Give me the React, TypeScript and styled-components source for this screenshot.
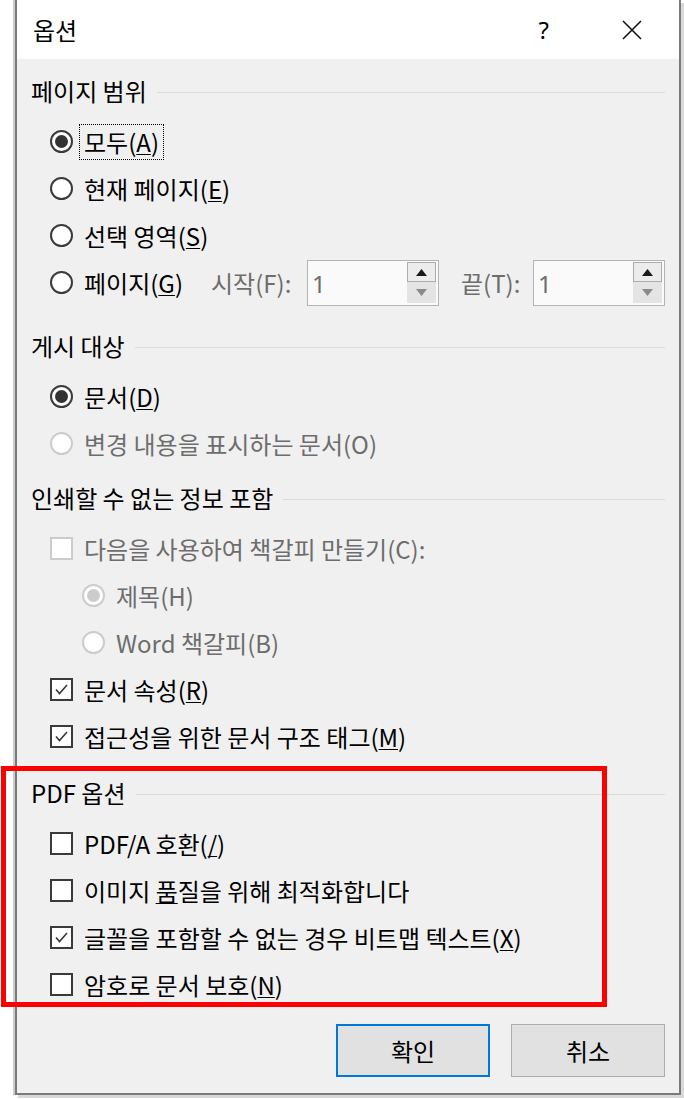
import React from 'react';
import styled, { createGlobalStyle } from 'styled-components';

const Global = createGlobalStyle`
  html, body { margin: 0; padding: 0; background: #fff; }
  body { font-family: "Noto Sans CJK KR", "Noto Sans", sans-serif; }
  * { box-sizing: border-box; }
`;

const Page = styled.div`
  position: relative;
  width: 684px;
  height: 1099px;
  overflow: hidden;
  background: #fff;
  display: flex;
  align-items: flex-start;
  padding-left: 15px;
`;

const Dialog = styled.div`
  width: 666px;
  height: 1095px;
  border: 2px solid #7a7a7a;
  border-top: none;
  background: #f0f0f0;
  display: flex;
  flex-direction: column;
  box-shadow: -2px 0 0 #cccccc, 3px 3px 0 #d9d9d9;
  color: #000;
  font-size: 24px;
`;

const TitleBar = styled.div`
  height: 59px;
  flex: none;
  background: #fff;
  display: flex;
  align-items: center;
  padding: 0 37px 0 16px;
`;

const TitleText = styled.div`
  flex: 1;
  line-height: 30px;
`;

const HelpMark = styled.span`
  font-family: "Noto Sans", sans-serif;
  font-size: 24px;
  line-height: 30px;
  margin-right: 73px;
`;

const CloseIcon = styled.svg`
  width: 20px;
  height: 20px;
  display: block;
`;

const Body = styled.div`
  flex: 1;
  display: flex;
  flex-direction: column;
  padding: 17px 14px 16px 14px;
`;

const Section = styled.section<{ $mt?: number }>`
  margin-top: ${(p) => p.$mt ?? 0}px;
  display: flex;
  flex-direction: column;
`;

const Header = styled.div`
  height: 30px;
  line-height: 30px;
  display: flex;
  align-items: center;
  white-space: nowrap;
`;

const HeaderLine = styled.div`
  flex: 1;
  height: 1px;
  background: #dcdcdc;
  margin-left: 10px;
  margin-top: 3px;
`;

const Rows = styled.div`
  margin-top: 12px;
  margin-left: 19px;
  display: flex;
  flex-direction: column;
`;

const Row = styled.div<{ $indent?: number }>`
  height: 47px;
  display: flex;
  align-items: center;
  padding-left: ${(p) => p.$indent ?? 0}px;
`;

const RadioCircle = styled.span<{ $disabled?: boolean }>`
  width: 23px;
  height: 23px;
  flex: none;
  border-radius: 50%;
  border: 2px solid ${(p) => (p.$disabled ? '#cccccc' : '#3a3a3a')};
  background: #fff;
  display: flex;
  align-items: center;
  justify-content: center;
`;

const RadioDot = styled.span<{ $disabled?: boolean }>`
  width: 13px;
  height: 13px;
  border-radius: 50%;
  background: ${(p) => (p.$disabled ? '#cccccc' : '#333')};
`;

const CheckBoxBox = styled.span<{ $disabled?: boolean }>`
  width: 23px;
  height: 23px;
  flex: none;
  border: 2px solid ${(p) => (p.$disabled ? '#cccccc' : '#3a3a3a')};
  background: #fff;
  display: flex;
  align-items: center;
  justify-content: center;
`;

const Label = styled.span<{ $disabled?: boolean; $focus?: boolean }>`
  margin-left: 6px;
  padding: 2px 4px;
  border: 1px dotted ${(p) => (p.$focus ? '#000' : 'transparent')};
  line-height: 30px;
  white-space: nowrap;
  color: ${(p) => (p.$disabled ? '#6d6d6d' : '#000')};
`;

const Mn = styled.u`
  text-decoration-thickness: 1px;
  text-underline-offset: 2px;
`;

const SpinGroup = styled.div`
  margin-left: auto;
  display: flex;
  align-items: center;
`;

const SpinLabel = styled.span<{ $w: number; $pl?: number }>`
  width: ${(p) => p.$w}px;
  padding-left: ${(p) => p.$pl ?? 0}px;
  color: #6d6d6d;
  line-height: 30px;
  white-space: nowrap;
`;

const SpinBox = styled.div`
  width: 132px;
  height: 46px;
  border: 1px solid #b4b4b4;
  background: #fafafa;
  display: flex;
  align-items: center;
`;

const SpinValue = styled.span`
  flex: 1;
  padding-left: 4px;
  font-family: "Noto Sans", sans-serif;
  font-size: 24px;
  color: #6d6d6d;
  line-height: 30px;
  margin-top: 2px;
`;

const SpinButtons = styled.div`
  width: 29px;
  height: 41px;
  margin-right: 2px;
  display: flex;
  flex-direction: column;
`;

const SpinUp = styled.div`
  height: 20px;
  border: 1px solid #adadad;
  background: #ececec;
  display: flex;
  align-items: center;
  justify-content: center;
`;

const SpinDown = styled.div`
  flex: 1;
  background: #e4e4e4;
  display: flex;
  align-items: center;
  justify-content: center;
`;

const ButtonRow = styled.div`
  margin-top: 16px;
  display: flex;
  justify-content: flex-end;
  gap: 21px;
`;

const DialogButton = styled.button<{ $primary?: boolean }>`
  width: 154px;
  height: 53px;
  background: #e1e1e1;
  border: ${(p) => (p.$primary ? '2px solid #0078d7' : '1px solid #adadad')};
  font-family: "Noto Sans CJK KR", sans-serif;
  font-size: 24px;
  color: #000;
  padding: 0;
  line-height: 30px;
`;

const Annotation = styled.div`
  position: absolute;
  left: 1px;
  top: 766px;
  width: 606px;
  height: 241px;
  border: 5px solid #ff0000;
  pointer-events: none;
`;

const LabelText: React.FC<{ pre: string; mn?: string; post?: string }> = ({ pre, mn, post }) => (
  <>
    {pre}
    {mn !== undefined && <Mn>{mn}</Mn>}
    {post}
  </>
);

const Radio: React.FC<{ checked?: boolean; disabled?: boolean; focus?: boolean; children: React.ReactNode }> = ({
  checked,
  disabled,
  focus,
  children,
}) => (
  <>
    <RadioCircle $disabled={disabled}>{checked && <RadioDot $disabled={disabled} />}</RadioCircle>
    <Label $disabled={disabled} $focus={focus}>
      {children}
    </Label>
  </>
);

const Check: React.FC<{ checked?: boolean; disabled?: boolean; children: React.ReactNode }> = ({
  checked,
  disabled,
  children,
}) => (
  <>
    <CheckBoxBox $disabled={disabled}>
      {checked && (
        <svg width="19" height="19" viewBox="0 0 19 19">
          <polyline points="4,9.5 7.5,13.5 15,5" fill="none" stroke="#333" strokeWidth="1.5" />
        </svg>
      )}
    </CheckBoxBox>
    <Label $disabled={disabled}>{children}</Label>
  </>
);

const Triangle: React.FC<{ up?: boolean; color: string }> = ({ up, color }) => (
  <svg width="11" height="7" viewBox="0 0 11 7">
    <polygon points={up ? '0,7 11,7 5.5,0' : '0,0 11,0 5.5,7'} fill={color} />
  </svg>
);

const Spinner: React.FC = () => (
  <SpinBox>
    <SpinValue>1</SpinValue>
    <SpinButtons>
      <SpinUp>
        <Triangle up color="#1a1a1a" />
      </SpinUp>
      <SpinDown>
        <Triangle color="#8a8a8a" />
      </SpinDown>
    </SpinButtons>
  </SpinBox>
);

const SectionHeader: React.FC<{ children: React.ReactNode }> = ({ children }) => (
  <Header>
    {children}
    <HeaderLine />
  </Header>
);

export default function App() {
  return (
    <Page>
      <Global />
      <Dialog>
        <TitleBar>
          <TitleText>옵션</TitleText>
          <HelpMark>?</HelpMark>
          <CloseIcon viewBox="0 0 20 20">
            <path d="M1 1 L19 19 M19 1 L1 19" stroke="#111" strokeWidth="1.6" fill="none" />
          </CloseIcon>
        </TitleBar>
        <Body>
          <Section>
            <SectionHeader>페이지 범위</SectionHeader>
            <Rows>
              <Row>
                <Radio checked focus>
                  <LabelText pre="모두(" mn="A" post=")" />
                </Radio>
              </Row>
              <Row>
                <Radio>
                  <LabelText pre="현재 페이지(" mn="E" post=")" />
                </Radio>
              </Row>
              <Row>
                <Radio>
                  <LabelText pre="선택 영역(" mn="S" post=")" />
                </Radio>
              </Row>
              <Row>
                <Radio>
                  <LabelText pre="페이지(" mn="G" post=")" />
                </Radio>
                <SpinGroup>
                  <SpinLabel $w={96}>시작(F):</SpinLabel>
                  <Spinner />
                  <SpinLabel $w={94} $pl={22}>끝(T):</SpinLabel>
                  <Spinner />
                </SpinGroup>
              </Row>
            </Rows>
          </Section>

          <Section $mt={25}>
            <SectionHeader>게시 대상</SectionHeader>
            <Rows>
              <Row>
                <Radio checked>
                  <LabelText pre="문서(" mn="D" post=")" />
                </Radio>
              </Row>
              <Row>
                <Radio disabled>변경 내용을 표시하는 문서(O)</Radio>
              </Row>
            </Rows>
          </Section>

          <Section $mt={16}>
            <SectionHeader>인쇄할 수 없는 정보 포함</SectionHeader>
            <Rows>
              <Row>
                <Check disabled>다음을 사용하여 책갈피 만들기(C):</Check>
              </Row>
              <Row $indent={32}>
                <Radio checked disabled>
                  제목(H)
                </Radio>
              </Row>
              <Row $indent={32}>
                <Radio disabled>Word 책갈피(B)</Radio>
              </Row>
              <Row>
                <Check checked>
                  <LabelText pre="문서 속성(" mn="R" post=")" />
                </Check>
              </Row>
              <Row>
                <Check checked>
                  <LabelText pre="접근성을 위한 문서 구조 태그(" mn="M" post=")" />
                </Check>
              </Row>
            </Rows>
          </Section>

          <Section $mt={18}>
            <SectionHeader>PDF 옵션</SectionHeader>
            <Rows>
              <Row>
                <Check>
                  <LabelText pre="PDF/A 호환(" mn="/" post=")" />
                </Check>
              </Row>
              <Row>
                <Check>
                  <LabelText pre="이미지 " mn="품" post="질을 위해 최적화합니다" />
                </Check>
              </Row>
              <Row>
                <Check checked>
                  <LabelText pre="글꼴을 포함할 수 없는 경우 비트맵 텍스트(" mn="X" post=")" />
                </Check>
              </Row>
              <Row>
                <Check>
                  <LabelText pre="암호로 문서 보호(" mn="N" post=")" />
                </Check>
              </Row>
            </Rows>
          </Section>

          <ButtonRow>
            <DialogButton $primary>확인</DialogButton>
            <DialogButton>취소</DialogButton>
          </ButtonRow>
        </Body>
      </Dialog>
      <Annotation />
    </Page>
  );
}
